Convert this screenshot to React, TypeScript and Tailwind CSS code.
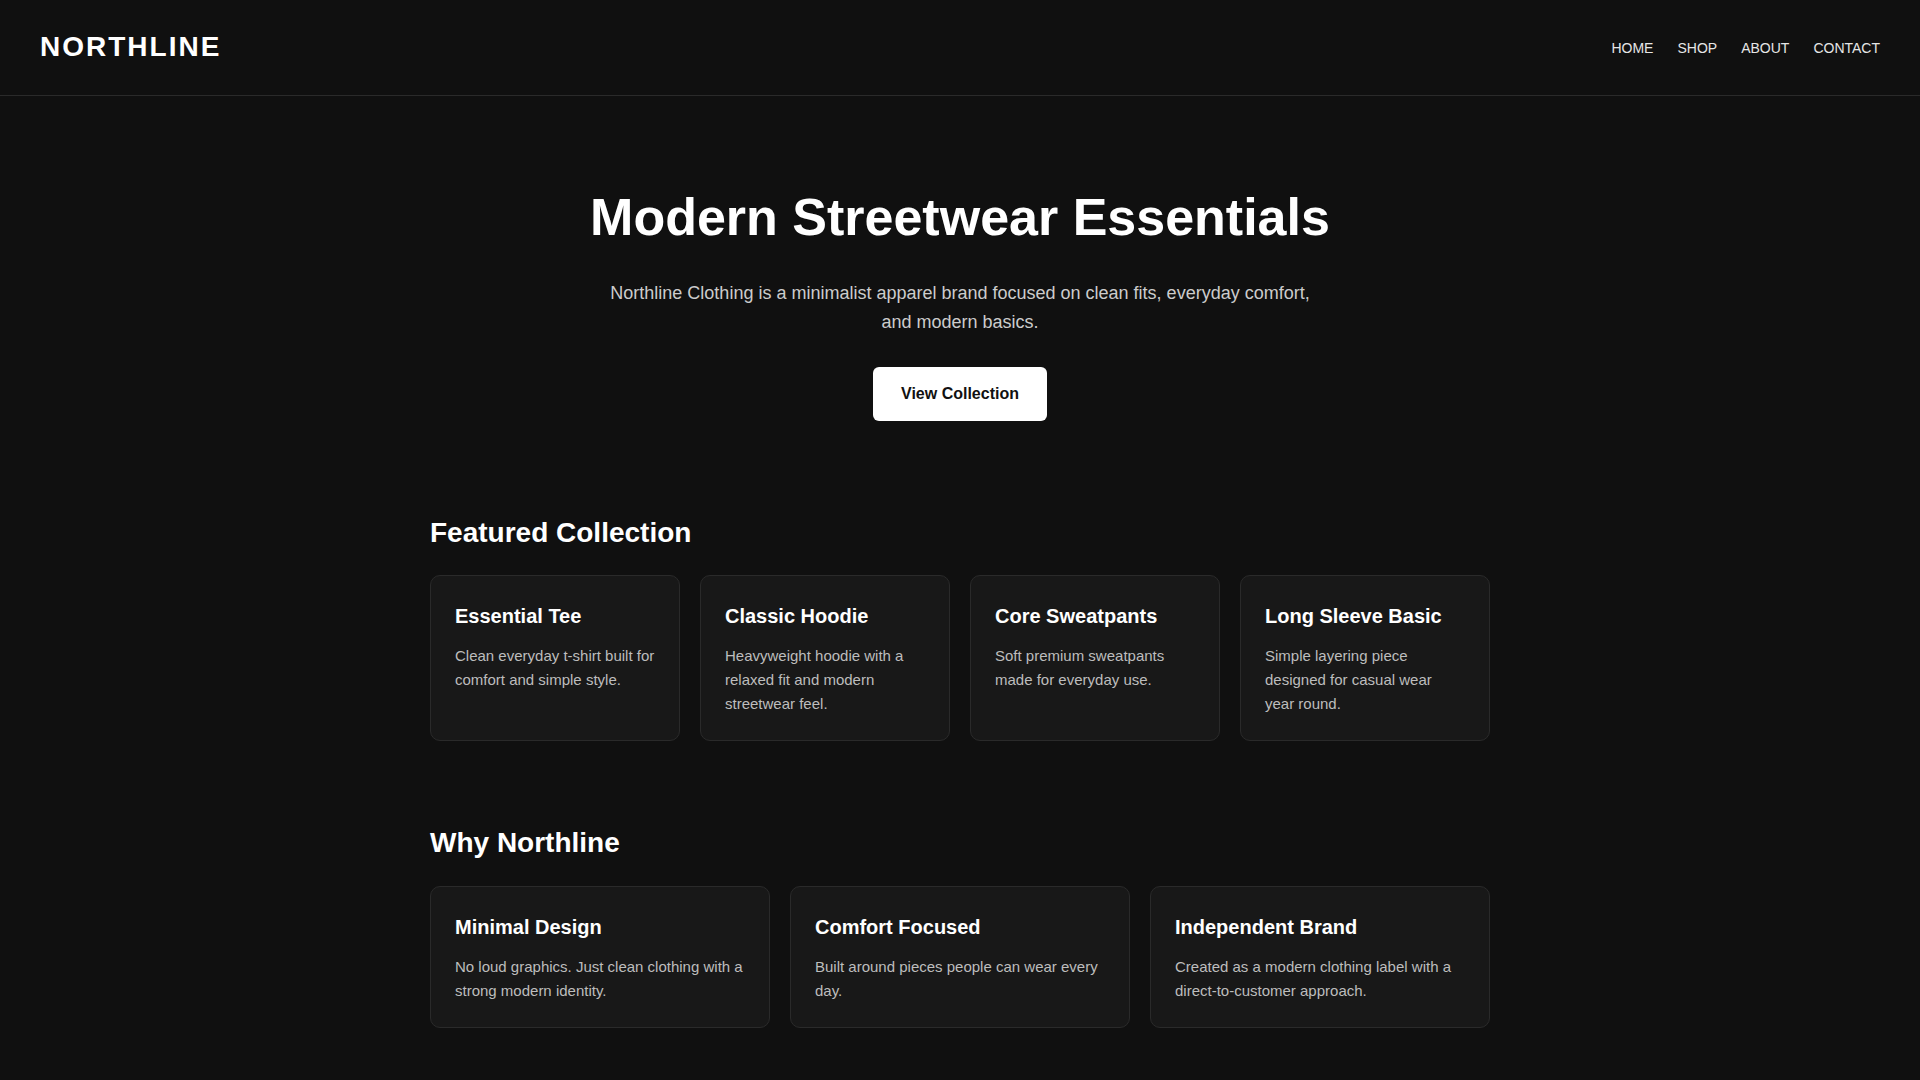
import React from "react";

const featured = [
  { title: "Essential Tee", desc: "Clean everyday t-shirt built for comfort and simple style." },
  { title: "Classic Hoodie", desc: "Heavyweight hoodie with a relaxed fit and modern streetwear feel." },
  { title: "Core Sweatpants", desc: "Soft premium sweatpants made for everyday use." },
  { title: "Long Sleeve Basic", desc: "Simple layering piece designed for casual wear year round." },
];

const why = [
  { title: "Minimal Design", desc: "No loud graphics. Just clean clothing with a strong modern identity." },
  { title: "Comfort Focused", desc: "Built around pieces people can wear every day." },
  { title: "Independent Brand", desc: "Created as a modern clothing label with a direct-to-customer approach." },
];

function Card({ title, desc }: { title: string; desc: string }) {
  return (
    <div className="rounded-[10px] border border-[#2a2a2a] bg-[#181818] p-6">
      <h3 className="mb-3 text-[20px] font-bold leading-[32px] text-white">{title}</h3>
      <p className="text-[15px] leading-[24px] text-[#bdbdbd]">{desc}</p>
    </div>
  );
}

export default function App() {
  return (
    <div
      className="min-h-screen bg-[#101010] text-white leading-[1.6]"
      style={{ fontFamily: '"Liberation Sans", Arial, sans-serif' }}
    >
      <header className="flex h-[96px] items-center justify-between border-b border-[#2a2a2a] px-10">
        <div className="text-[28px] font-bold tracking-[2px] leading-[44.8px] text-white">NORTHLINE</div>
        <nav className="mt-[2px] flex items-center gap-6 text-[14px] text-[#e6e6e6]">
          <a href="#">HOME</a>
          <a href="#">SHOP</a>
          <a href="#">ABOUT</a>
          <a href="#">CONTACT</a>
        </nav>
      </header>

      <section className="flex flex-col items-center pt-[90px] pb-[90px] text-center">
        <h1 className="mb-[31px] text-[52px] font-bold leading-[1.2] text-white">Modern Streetwear Essentials</h1>
        <p className="mb-[30px] max-w-[720px] text-[18px] leading-[28.8px] text-[#cccccc]">
          Northline Clothing is a minimalist apparel brand focused on clean fits, everyday comfort, and modern basics.
        </p>
        <button className="rounded-[6px] bg-white px-[28px] py-[14px] text-[16px] font-bold leading-[25.6px] text-[#111111]">
          View Collection
        </button>
      </section>

      <section className="mx-auto w-[1060px]">
        <h2 className="mb-5 text-[28px] font-bold leading-[44.8px] text-white">Featured Collection</h2>
        <div className="grid grid-cols-4 gap-5">
          {featured.map((f) => (
            <Card key={f.title} title={f.title} desc={f.desc} />
          ))}
        </div>
      </section>

      <section className="mx-auto mt-[80px] w-[1060px] pb-[80px]">
        <h2 className="mb-5 text-[28px] font-bold leading-[44.8px] text-white">Why Northline</h2>
        <div className="grid grid-cols-3 gap-5">
          {why.map((f) => (
            <Card key={f.title} title={f.title} desc={f.desc} />
          ))}
        </div>
      </section>
    </div>
  );
}
